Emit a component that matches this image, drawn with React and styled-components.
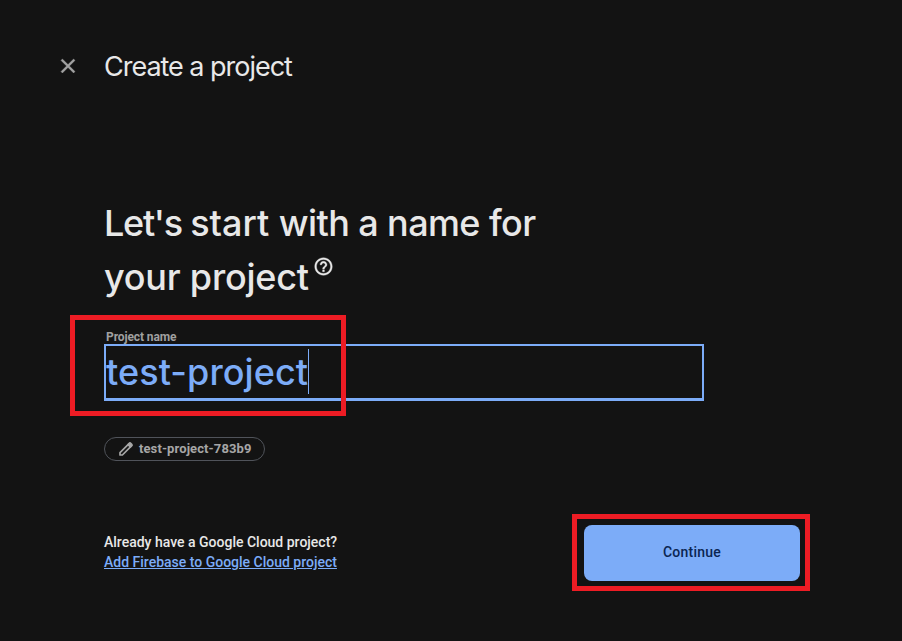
import React from 'react';
import styled, { createGlobalStyle } from 'styled-components';

const GlobalStyle = createGlobalStyle`
  * { box-sizing: border-box; }
  body { margin: 0; background: #131313; }
`;

const Page = styled.main`
  position: relative;
  width: 902px;
  height: 641px;
  overflow: hidden;
  background: #131313;
  color: #e8e8e8;
  font-family: Roboto, sans-serif;
`;

const Header = styled.header`
  display: flex;
  align-items: center;
  gap: 24px;
  height: 132px;
  padding-left: 56px;
`;

const CloseButton = styled.button`
  display: flex;
  width: 24px;
  height: 24px;
  padding: 0;
  border: 0;
  background: none;
  color: #a3a3a3;
`;

const Title = styled.h1`
  margin: 0;
  padding-top: 2px;
  font: 400 27px/36px Inter, sans-serif;
  letter-spacing: -1.02px;
  white-space: nowrap;
`;

const Content = styled.section`
  width: 600px;
  margin: 64px 0 0 104px;
`;

const Heading = styled.h2`
  display: flex;
  flex-direction: column;
  margin: 0;
  font: 500 36px/54px Inter, sans-serif;
  white-space: nowrap;
`;

const HeadingLine = styled.span`
  display: flex;
  height: 54px;
  letter-spacing: ${({ $tracking }) => $tracking}px;
  white-space: pre;
`;

const Word = styled.span`
  letter-spacing: ${({ $tracking }) => $tracking}px;
`;

const HelpIcon = styled.svg`
  flex: none;
  margin: 6px 0 0 4px;
  stroke: currentColor;
  stroke-width: 0.4px;
`;

const Label = styled.label`
  display: block;
  height: 14px;
  margin-top: 26px;
  padding-left: 2px;
  color: #a0a0a0;
  font-size: 12px;
  font-weight: 700;
  letter-spacing: -0.1px;
  line-height: 14px;
`;

const Field = styled.div`
  display: flex;
  align-items: center;
  height: 57px;
  border: 2px solid #7cacf8;
  border-bottom-width: 3px;
  color: #7cacf8;
  font: 500 36px/52px Inter, sans-serif;
`;

const FieldText = styled.span`
  width: 202px;
  white-space: nowrap;
  letter-spacing: 0.08px;
`;

const Caret = styled.span`
  width: 1px;
  height: 45px;
  margin-bottom: 1px;
  background: #7cacf8;
`;

const Chip = styled.div`
  display: flex;
  align-items: center;
  gap: 5px;
  width: 161px;
  height: 24px;
  margin-top: 36px;
  padding-left: 13px;
  border: 1px solid #50535a;
  border-radius: 12px;
  color: #a6a6a6;
  font-size: 13px;
  font-weight: 700;
  letter-spacing: 0.1px;
  white-space: nowrap;
`;

const ChipText = styled.span`
  padding-bottom: 2px;
`;

const Footer = styled.footer`
  display: flex;
  justify-content: space-between;
  width: 696px;
  margin: 64px 0 0 104px;
`;

const CloudPrompt = styled.div`
  padding-top: 7px;
  font-size: 14px;
  font-weight: 500;
  line-height: 20px;
  white-space: nowrap;
`;

const CloudLink = styled.a`
  display: block;
  color: #7cacf8;
  text-decoration: underline;
`;

const ContinueButton = styled.button`
  width: 216px;
  height: 56px;
  padding: 0 0 2px;
  border: 0;
  border-radius: 8px;
  background: #7cacf8;
  color: #0a2552;
  font: 500 14px/20px Roboto, sans-serif;
  letter-spacing: 0.25px;
`;

const Highlight = styled.div`
  position: absolute;
  left: ${({ $x }) => $x}px;
  top: ${({ $y }) => $y}px;
  width: ${({ $w }) => $w}px;
  height: ${({ $h }) => $h}px;
  border: 5px solid #ed1c24;
  pointer-events: none;
`;

export default function App() {
  return (
    <Page>
      <GlobalStyle />
      <Header>
        <CloseButton aria-label="Close">
          <svg width="24" height="24" viewBox="0 0 24 24" fill="currentColor" stroke="currentColor" strokeWidth="0.4">
            <path d="M19 6.41 17.59 5 12 10.59 6.41 5 5 6.41 10.59 12 5 17.59 6.41 19 12 13.41 17.59 19 19 17.59 13.41 12z" />
          </svg>
        </CloseButton>
        <Title>Create a project</Title>
      </Header>
      <Content>
        <Heading>
          <HeadingLine $tracking={-0.6}>
            <Word $tracking={-1.3}>Let's </Word>
            <Word $tracking={0}>start </Word>
            <Word $tracking={-0.6}>with a name for</Word>
          </HeadingLine>
          <HeadingLine $tracking={-0.22}>
            your project
            <HelpIcon width="21" height="21" viewBox="0 0 24 24" fill="currentColor">
              <path d="M11 18h2v-2h-2v2zm1-16C6.48 2 2 6.48 2 12s4.48 10 10 10 10-4.48 10-10S17.52 2 12 2zm0 18c-4.41 0-8-3.59-8-8s3.59-8 8-8 8 3.59 8 8-3.59 8-8 8zm0-14c-2.21 0-4 1.79-4 4h2c0-1.1.9-2 2-2s2 .9 2 2c0 2-3 1.75-3 5h2c0-2.25 3-2.5 3-5 0-2.21-1.79-4-4-4z" />
            </HelpIcon>
          </HeadingLine>
        </Heading>
        <Label>Project name</Label>
        <Field>
          <FieldText>test-project</FieldText>
          <Caret />
        </Field>
        <Chip>
          <svg width="16" height="16" viewBox="0 0 16 16" fill="none" stroke="currentColor" strokeWidth="1.7" strokeLinejoin="round">
            <path d="M2 11.6 11.300 2.300a1 1 0 0 1 1.400 0l1 1a1 1 0 0 1 0 1.400L4.400 14H2z" />
            <path d="M10 3.600 12.400 6 13.700 4.500 11.500 2.400z" fill="currentColor" />
          </svg>
          <ChipText>test-project-783b9</ChipText>
        </Chip>
      </Content>
      <Footer>
        <CloudPrompt>
          Already have a Google Cloud project?
          <CloudLink>Add Firebase to Google Cloud project</CloudLink>
        </CloudPrompt>
        <ContinueButton>Continue</ContinueButton>
      </Footer>
      <Highlight $x={70} $y={315} $w={276} $h={101} />
      <Highlight $x={572} $y={514} $w={238} $h={77} />
    </Page>
  );
}
